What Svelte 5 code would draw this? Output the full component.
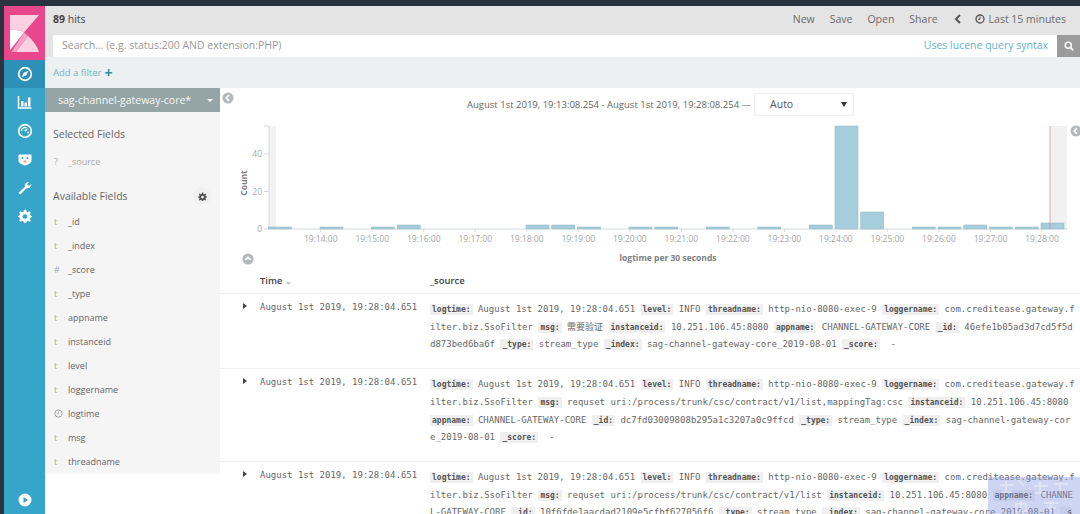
<script>
  const navIcons = ["compass", "bars", "gauge", "shield", "wrench", "gear"];

  const fields = [
    ["t", "_id"],
    ["t", "_index"],
    ["#", "_score"],
    ["t", "_type"],
    ["t", "appname"],
    ["t", "instanceid"],
    ["t", "level"],
    ["t", "loggername"],
    ["clock", "logtime"],
    ["t", "msg"],
    ["t", "threadname"],
  ];

  // slot index and bar height in px
  const bars = [
    [0, 2], [2, 2], [4, 2], [5, 4], [10, 4], [11, 4], [12, 2], [14, 2], [15, 2],
    [17, 2], [19, 2], [21, 4], [22, 103], [23, 17], [25, 2], [26, 2], [27, 4],
    [28, 2], [29, 2], [30, 6],
  ];
  const barBase = 109;
  const ticks = ["19:14:00", "19:15:00", "19:16:00", "19:17:00", "19:18:00", "19:19:00", "19:20:00",
    "19:21:00", "19:22:00", "19:23:00", "19:24:00", "19:25:00", "19:26:00", "19:27:00", "19:28:00"];

  const stamp = "August 1st 2019, 19:28:04.651";
  const head = [
    ["logtime", stamp],
    ["level", "INFO"],
    ["threadname", "http-nio-8080-exec-9"],
    ["loggername", "com.creditease.gateway.filter.biz.SsoFilter"],
  ];

  const rows = [
    [
      ...head,
      ["msg", "需要验证"],
      ["instanceid", "10.251.106.45:8080"],
      ["appname", "CHANNEL-GATEWAY-CORE"],
      ["_id", "46efe1b05ad3d7cd5f5dd873bed6ba6f"],
      ["_type", "stream_type"],
      ["_index", "sag-channel-gateway-core_2019-08-01"],
      ["_score", " -"],
    ],
    [
      ...head,
      ["msg", "requset uri:/process/trunk/csc/contract/v1/list,mappingTag:csc"],
      ["instanceid", "10.251.106.45:8080"],
      ["appname", "CHANNEL-GATEWAY-CORE"],
      ["_id", "dc7fd03009808b295a1c3207a0c9ffcd"],
      ["_type", "stream_type"],
      ["_index", "sag-channel-gateway-core_2019-08-01"],
      ["_score", " -"],
    ],
    [
      ...head,
      ["msg", "requset uri:/process/trunk/csc/contract/v1/list"],
      ["instanceid", "10.251.106.45:8080"],
      ["appname", "CHANNEL-GATEWAY-CORE"],
      ["_id", "10f6fde1aacdad2109e5cfbf627056f6"],
      ["_type", "stream_type"],
      ["_index", "sag-channel-gateway-core_2019-08-01"],
      ["_score", " -"],
    ],
  ];
</script>

{#snippet circleChevron(cls, rotate)}
  <svg class={cls} viewBox="0 0 12 12" width="12" height="12">
    <circle cx="6" cy="6" r="5.5" fill="#b4b8ba" />
    <path d="M7 3.2 4.2 6 7 8.8" fill="none" stroke="#fff" stroke-width="1.7" transform="rotate({rotate} 6 6)" />
  </svg>
{/snippet}

<div class="page">
  <aside class="sidebar">
    <div class="logo">
      <svg viewBox="0 0 29 37" width="29" height="37">
        <path d="M0 0H29L14 17.500C10 15.500 5 14.500 0 15Z" fill="#fad0e2" />
        <path d="M0 15C5 14.500 10 15.500 14 17.500L1 34 0 35Z" fill="#fff" />
        <path d="M1.500 37 14 17.500 18 21 6 37Z" fill="#f4a3c6" />
        <path d="M6 37 18 21C23 25.500 27 31 29 37Z" fill="#fad0e2" />
      </svg>
    </div>
    {#each navIcons as icon, i}
      <div class="nav-item" class:active={i === 0}>
        <svg viewBox="0 0 16 16" width="16" height="16">
          {#if icon === "compass"}
            <circle cx="8" cy="8" r="6.3" fill="none" stroke="#fff" stroke-width="1.7" />
            <path d="M11.300 4.700 9.300 9.300 4.700 11.300 6.700 6.700Z" fill="#fff" />
          {:else if icon === "bars"}
            <path d="M1.500 2V14H14.500" fill="none" stroke="#fff" stroke-width="1.5" />
            <path d="M4 7H6.500V12.500H4ZM7.500 8.500H10V12.500H7.500ZM11 3.500H13.500V12.500H11Z" fill="#fff" />
          {:else if icon === "gauge"}
            <circle cx="8" cy="8" r="6.300" fill="none" stroke="#fff" stroke-width="1.700" />
            <path d="M4.500 8A3.500 3.500 0 0 1 9.500 4.800" fill="none" stroke="#fff" stroke-width="1.300" />
            <path d="M7.200 7.200 11 5 8.800 8.800Z" fill="#fff" />
            <circle cx="11" cy="9.500" r="1" fill="#fff" />
          {:else if icon === "shield"}
            <path d="M1.500 3.500H14.500V9.500C14.500 12 11 14 8 14.500 5 14 1.500 12 1.500 9.500Z" fill="#fff" />
            <circle cx="5.500" cy="7" r="1" fill="#36a5c9" />
            <circle cx="10.500" cy="7" r="1" fill="#36a5c9" />
            <path d="M6.500 9.500H9.500V11.500H6.500Z" fill="#e8a08c" />
          {:else if icon === "wrench"}
            <path d="M1.500 12.800 8 6.700C7.300 4.200 9.200 1.800 12.200 1.700L10 4.200 11.800 6 14.400 3.800C14.500 6.800 12 8.800 9.500 8.200L3.300 14.500Z" fill="#fff" />
          {:else}
            <path d="M8 1.800 9.200 1.800 9.700 3.700 11 4.200 12.700 3.200 13.900 4.500 12.900 6.100 13.400 7.400 15 8 15 9 13.400 9.600 12.900 10.900 13.900 12.500 12.700 13.700 11 12.800 9.700 13.300 9.200 15 7 15 6.400 13.300 5.100 12.800 3.400 13.700 2.200 12.500 3.100 10.900 2.600 9.600 1 9 1 8 2.600 7.400 3.100 6.100 2.200 4.500 3.400 3.200 5.100 4.200 6.400 3.700 7 1.800Z" fill="#fff" />
            <circle cx="8" cy="8.500" r="2.300" fill="#36a5c9" />
          {/if}
        </svg>
      </div>
    {/each}
    <div class="collapse-nav">
      <svg viewBox="0 0 14 14" width="14" height="14">
        <circle cx="7" cy="7" r="6.500" fill="#fff" />
        <path d="M5.500 4 10 7 5.500 10Z" fill="#36a5c9" />
      </svg>
    </div>
  </aside>

  <main class="content">
    <header class="topbar">
      <div class="hits"><b>89</b> hits</div>
      <nav class="menu">
        <span>New</span>
        <span>Save</span>
        <span>Open</span>
        <span>Share</span>
        <svg class="back" viewBox="0 0 8 10" width="8" height="10">
          <path d="M6 1 2 5 6 9" fill="none" stroke="#555" stroke-width="2" />
        </svg>
        <span class="range">
          <svg viewBox="0 0 10 10" width="10" height="10">
            <circle cx="5" cy="5" r="4" fill="none" stroke="#555" stroke-width="1.300" />
            <path d="M5 2.500V5.300H3" fill="none" stroke="#555" stroke-width="1" />
          </svg>
          Last 15 minutes
        </span>
      </nav>
    </header>

    <div class="query">
      <div class="query-input">
        <span class="placeholder">Search... (e.g. status:200 AND extension:PHP)</span>
        <span class="syntax">Uses lucene query syntax</span>
      </div>
      <div class="query-btn">
        <svg viewBox="0 0 10 10" width="10" height="10">
          <circle cx="4.200" cy="4.200" r="3" fill="none" stroke="#fff" stroke-width="1.500" />
          <path d="M6.500 6.500 9.300 9.300" stroke="#fff" stroke-width="1.800" />
        </svg>
      </div>
    </div>

    <div class="filters">Add a filter <b>+</b></div>

    <div class="body">
      <section class="fields">
        <div class="index-name">
          <span>sag-channel-gateway-core*</span>
          <i class="caret"></i>
        </div>
        <div class="fields-list">
          <h3>Selected Fields</h3>
          <div class="field muted"><span class="type">?</span>_source</div>
          <div class="avail">
            <h3>Available Fields</h3>
            <span class="gear">
              <svg viewBox="0 0 16 16" width="9" height="9">
                <path d="M7 1H9L9.500 3.200 11.300 4 13.200 2.800 14.500 4.200 13.300 6.100 14 7.800 16 8.200V9.800L14 10.300 13.300 12 14.500 13.800 13.200 15.200 11.300 14 9.500 14.700 9 16H7L6.500 14.700 4.700 14 2.800 15.200 1.500 13.800 2.700 12 2 10.300 0 9.800V8.200L2 7.800 2.700 6.100 1.500 4.200 2.800 2.800 4.700 4 6.500 3.200Z" fill="#555" />
                <circle cx="8" cy="9" r="2.500" fill="#f0f0f0" />
              </svg>
            </span>
          </div>
          {#each fields as [type, name]}
            <div class="field">
              <span class="type">
                {#if type === "clock"}
                  <svg viewBox="0 0 10 10" width="9" height="9">
                    <circle cx="5" cy="5" r="4" fill="none" stroke="#999" stroke-width="1" />
                    <path d="M5 2.800V5.300H3.200" fill="none" stroke="#999" stroke-width=".8" />
                  </svg>
                {:else}
                  {type}
                {/if}
              </span>
              {name}
            </div>
          {/each}
        </div>
      </section>

      <section class="results">
        {@render circleChevron("hide-fields", 0)}
        {@render circleChevron("hide-right", 0)}

        <div class="range-line">
          <span>August 1st 2019, 19:13:08.254 - August 1st 2019, 19:28:08.254 —</span>
          <div class="interval">Auto <i></i></div>
        </div>

        <svg class="chart" viewBox="0 0 860 145" width="860" height="145">
          <rect x="49" y="6" width="7" height="103" fill="#f3f3f3" />
          <rect x="830" y="6" width="17" height="103" fill="#f1f1f1" />
          <path d="M49 6V109H848" fill="none" stroke="#d4dade" stroke-width="1" />
          <path d="M44 6H49M44 34H49M44 71.500H49M44 109H49" stroke="#d4dade" />
          {#each bars as [slot, h]}
            <rect class="bar" x={48.500 + slot * 25.75} y={barBase - h} width="23" height={h} />
          {/each}
          <path d="M830 6V109" stroke="#d88" stroke-opacity=".7" />
          {#each ticks as tick, i}
            <path d={`M${100.700 + i * 51.520} 109v3`} stroke="#d4dade" />
            <text class="tick" x={100.700 + i * 51.520} y="122" text-anchor="middle">{tick}</text>
          {/each}
          <text class="tick" x="42" y="37" text-anchor="end">40</text>
          <text class="tick" x="42" y="74.500" text-anchor="end">20</text>
          <text class="tick" x="42" y="112" text-anchor="end">0</text>
          <text class="axis" transform="translate(27 63) rotate(-90)" text-anchor="middle">Count</text>
          <text class="axis" x="448" y="140.500" text-anchor="middle">logtime per 30 seconds</text>
        </svg>
        {@render circleChevron("hide-chart", 90)}

        <div class="thead">
          <span class="col-time">Time <small>⌄</small></span>
          <span>_source</span>
        </div>

        {#each rows as row}
          <div class="row">
            <i class="expand"></i>
            <span class="time">{stamp}</span>
            <div class="source">
              {#each row as [key, value]}
                <mark>{key}:</mark>{" "}<span class="val">{value}</span>{" "}
              {/each}
            </div>
          </div>
        {/each}
      </section>
    </div>
  </main>

  <div class="watermark">
    <svg viewBox="0 0 92 37" width="92" height="37">
      <path d="M18 4V15M12 8H25M13 15H24M30 3 36 9M52 5V16M46 9H60M47 16H58M72 4V13M66 7H80" fill="none" stroke="#fff" stroke-opacity=".45" stroke-width="1.500" />
      <path d="M28 27H38V35H28ZM33 24V35M56 26H70M58 31H68M63 24V36" fill="none" stroke="#fff" stroke-opacity=".45" stroke-width="1.500" />
    </svg>
  </div>
</div>

<style>
  :global(body) {
    margin: 0;
    overflow: hidden;
    background: #fff;
  }

  .page {
    position: relative;
    display: flex;
    width: 1080px;
    height: 514px;
    padding: 6px 0 0 4px;
    box-sizing: border-box;
    overflow: hidden;
    background: #2c3340;
    font-family: "Open Sans", sans-serif;
    color: #555;
  }

  .sidebar {
    position: relative;
    flex: 0 0 41px;
    background: #36a5c9;
  }

  .logo {
    height: 54px;
    display: flex;
    justify-content: center;
    align-items: flex-start;
    padding-top: 9px;
    box-sizing: border-box;
    background: #e8488b;
  }

  .nav-item {
    height: 28.500px;
    display: flex;
    align-items: center;
    justify-content: center;
  }

  .nav-item.active {
    height: 28px;
    background: #2d90b7;
  }

  .collapse-nav {
    position: absolute;
    bottom: 2px;
    left: 14px;
  }

  .content {
    flex: 1;
    min-width: 0;
    background: #fff;
  }

  .topbar {
    height: 29px;
    display: flex;
    align-items: center;
    justify-content: space-between;
    padding: 0 14px 3px 8px;
    box-sizing: border-box;
    background: #e4e4e4;
    font-size: 10.500px;
  }

  .hits {
    color: #444;
  }

  .menu {
    display: flex;
    align-items: center;
    gap: 15px;
    color: #6b6b6b;
  }

  .back {
    margin-left: 1px;
  }

  .range {
    display: flex;
    align-items: center;
    gap: 4px;
    margin-left: -2px;
  }

  .query {
    display: flex;
    height: 22px;
    padding-left: 8px;
    background: #e4e4e4;
  }

  .query-input {
    flex: 1;
    display: flex;
    align-items: center;
    justify-content: space-between;
    padding: 0 9px 2px 9px;
    box-sizing: border-box;
    background: #fff;
    font-size: 10.500px;
  }

  .placeholder {
    color: #999;
  }

  .syntax {
    color: #62b4cb;
  }

  .query-btn {
    flex: 0 0 23px;
    display: flex;
    align-items: center;
    justify-content: center;
    background: #9b9b9b;
  }

  .filters {
    height: 31px;
    display: flex;
    align-items: center;
    gap: 3px;
    padding-left: 8px;
    background: #ecf0f1;
    color: #6fb5ca;
    font-size: 9.500px;
  }

  .filters b {
    color: #2b8fae;
    font-size: 14px;
    line-height: 1;
  }

  .body {
    display: flex;
    height: 426px;
  }

  .fields {
    flex: 0 0 175px;
    align-self: flex-start;
  }

  .index-name {
    height: 24px;
    display: flex;
    align-items: center;
    justify-content: space-between;
    padding: 0 7px 0 13px;
    background: #95a5a6;
    color: #f4f6f6;
    font-size: 10.500px;
  }

  .caret {
    border: 3px solid transparent;
    border-top: 3px solid #fff;
    border-bottom: 0;
  }

  .fields-list {
    height: 362px;
    padding-top: 14px;
    box-sizing: border-box;
    background: #f5f5f5;
  }

  h3 {
    margin: 0;
    padding-left: 8px;
    font-size: 10.500px;
    font-weight: 400;
    line-height: 16px;
    color: #666;
  }

  .avail {
    display: flex;
    align-items: center;
    justify-content: space-between;
    margin-top: 14px;
    margin-bottom: 4px;
    height: 18px;
  }

  .gear {
    width: 18px;
    height: 18px;
    margin-right: 9px;
    display: flex;
    align-items: center;
    justify-content: center;
    border-radius: 50%;
    background: #f0f0f0;
  }

  .field {
    display: flex;
    align-items: center;
    height: 24px;
    padding-left: 8px;
    font-size: 9px;
    color: #666;
  }

  .field.muted {
    margin-top: 7px;
    color: #aaa;
  }

  .type {
    flex: 0 0 15px;
    display: flex;
    padding-left: 1px;
    box-sizing: border-box;
    color: #aaa;
  }

  .results {
    position: relative;
    flex: 1;
    min-width: 0;
  }

  .results :global(.hide-fields) {
    position: absolute;
    top: 4px;
    left: 2px;
  }

  .results :global(.hide-right) {
    position: absolute;
    top: 37px;
    right: -2px;
  }

  .results :global(.hide-chart) {
    position: absolute;
    top: 165px;
    left: 22px;
  }

  .range-line {
    height: 32px;
    display: flex;
    align-items: center;
    padding-left: 247px;
    gap: 3px;
    font-size: 9.500px;
    color: #666;
    box-sizing: border-box;
  }

  .interval {
    width: 100px;
    height: 23px;
    display: flex;
    align-items: center;
    justify-content: space-between;
    padding: 0 6px 0 15px;
    box-sizing: border-box;
    border: 1px solid #ecf0f1;
    border-radius: 2px;
    font-size: 10.500px;
    color: #555;
  }

  .interval i {
    border: 3.500px solid transparent;
    border-top: 5px solid #333;
    border-bottom: 0;
  }

  .chart {
    display: block;
  }

  .bar {
    fill: #a5cddb;
    stroke: #8fb6c4;
    stroke-width: 0.500;
  }

  .tick {
    font-size: 8.500px;
    fill: #a6a6a6;
  }

  .axis {
    font-size: 8.500px;
    font-weight: 700;
    fill: #7c8184;
  }

  .thead {
    display: flex;
    align-items: center;
    font-size: 9.500px;
    font-weight: 600;
    color: #444;
    border-bottom: 1px solid #ecf0f1;
    padding: 0 0 2px 40px;
    height: 24px;
    margin-top: 5px;
    box-sizing: border-box;
  }

  .col-time {
    width: 170px;
  }

  .col-time small {
    color: #aaa;
    font-size: 8px;
  }

  .row {
    position: relative;
    display: flex;
    padding: 7px 0 14px 40px;
    border-bottom: 1px solid #ecf0f1;
    font-family: "DejaVu Sans Mono", monospace, "Noto Sans CJK SC";
    font-size: 9px;
    line-height: 17.700px;
    color: #666;
    box-sizing: border-box;
  }

  .expand {
    position: absolute;
    left: 23px;
    top: 9px;
    border: 3px solid transparent;
    border-left: 4px solid #444;
    border-right: 0;
  }

  .time {
    flex: 0 0 170px;
    margin-top: -2px;
    white-space: nowrap;
  }

  .source {
    flex: 1;
    min-width: 0;
    padding-right: 4.400px;
    word-break: break-all;
  }

  mark {
    padding: 1px 2px;
    background: #efefef;
    color: #555;
    font-weight: 700;
    font-size: 8px;
  }

  .val {
    white-space: pre-wrap;
  }

  .watermark {
    position: absolute;
    right: 0;
    bottom: 0;
    width: 92px;
    height: 37px;
    background: rgba(135, 155, 225, 0.42);
  }

  .watermark svg {
    display: block;
  }
</style>
